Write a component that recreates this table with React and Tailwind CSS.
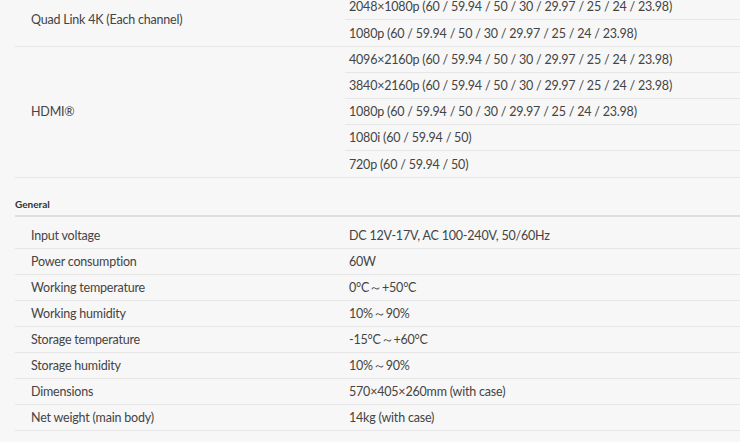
const rates = '(60 / 59.94 / 50 / 30 / 29.97 / 25 / 24 / 23.98)';

const videoGroups = [
  {
    label: 'Quad Link 4K (Each channel)',
    values: ['2048×1080p ' + rates, '1080p ' + rates],
  },
  {
    label: 'HDMI®',
    values: [
      '4096×2160p ' + rates,
      '3840×2160p ' + rates,
      '1080p ' + rates,
      '1080i (60 / 59.94 / 50)',
      '720p (60 / 59.94 / 50)',
    ],
  },
];

const general = [
  ['Input voltage', 'DC 12V-17V, AC 100-240V, 50/60Hz'],
  ['Power consumption', '60W'],
  ['Working temperature', '0°C～+50°C'],
  ['Working humidity', '10%～90%'],
  ['Storage temperature', '-15°C～+60°C'],
  ['Storage humidity', '10%～90%'],
  ['Dimensions', '570×405×260mm (with case)'],
  ['Net weight (main body)', '14kg (with case)'],
];

function SpecGroup({ label, values }) {
  return (
    <div className="flex border-b border-[#e6e6e6]">
      <div className="w-[330px] shrink-0 flex items-center pl-4">{label}</div>
      <div className="flex-1 flex flex-col">
        {values.map((v, i) => (
          <div
            key={i}
            className={
              'h-[26px] flex items-center pl-1 pt-[2px] ' +
              (i < values.length - 1 ? 'border-b border-[#e6e6e6]' : '')
            }
          >
            {v}
          </div>
        ))}
      </div>
    </div>
  );
}

export default function App() {
  return (
    <div
      className="min-h-[442px] bg-[#f7f7f7] text-[#444] text-[12.5px] tracking-[-0.2px] overflow-hidden"
      style={{ fontFamily: 'Lato, "Liberation Sans", sans-serif' }}
    >
      <div className="-mt-[6px] pl-[15px]">
        {videoGroups.map((g) => (
          <SpecGroup key={g.label} label={g.label} values={g.values} />
        ))}

        <div className="mt-[19px] pb-[4px] border-b-2 border-[#dedede] text-[10px] font-bold text-[#333] tracking-normal leading-[14px]">
          General
        </div>

        <div className="mt-[6px]">
          {general.map(([k, v]) => (
            <div key={k} className="flex h-[26px] pt-[2px] items-center border-b border-[#e6e6e6]">
              <div className="w-[330px] shrink-0 pl-4">{k}</div>
              <div className="flex-1 pl-1">{v}</div>
            </div>
          ))}
        </div>
      </div>
    </div>
  );
}
